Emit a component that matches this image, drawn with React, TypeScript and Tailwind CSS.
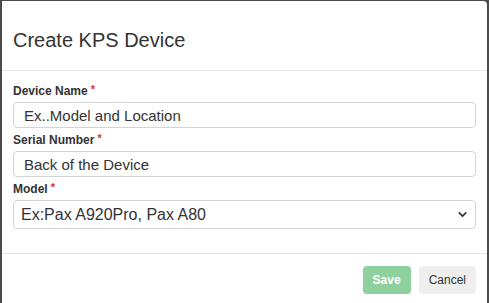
import { ChevronDown } from "lucide-react";

function FieldLabel({ children }: { children: string }) {
  return (
    <div className="flex items-start text-[12px] font-bold leading-[14px] text-[#333]">
      {children}
      <span className="ml-[3px] text-[11px] leading-[11px] text-[#e4312f]">*</span>
    </div>
  );
}

export default function App() {
  return (
    <div
      className="h-[303px] w-[489px] overflow-hidden bg-[#4b4b4b] pl-[2px] pt-[1px]"
      style={{ fontFamily: '"Liberation Sans", Arial, sans-serif' }}
    >
      <div className="flex h-[310px] w-[485px] flex-col rounded-tr-[4px] bg-white">
        <div className="flex h-[70px] items-center border-b border-[#e5e5e5] px-[11px] pt-[8px]">
          <h1 className="text-[20px] font-normal text-[#333]">Create KPS Device</h1>
        </div>
        <div className="flex flex-col px-[11px] pt-[13px]">
          <FieldLabel>Device Name</FieldLabel>
          <input
            defaultValue="Ex..Model and Location"
            className="mt-[4px] h-[26px] w-[463px] rounded-[4px] border border-[#d4d4d4] px-[10px] text-[15px] text-[#333] outline-none"
          />
          <div className="mt-[5px]">
            <FieldLabel>Serial Number</FieldLabel>
          </div>
          <input
            defaultValue="Back of the Device"
            className="mt-[4px] h-[26px] w-[463px] rounded-[4px] border border-[#d4d4d4] px-[10px] text-[15px] text-[#333] outline-none"
          />
          <div className="mt-[5px]">
            <FieldLabel>Model</FieldLabel>
          </div>
          <div className="mt-[4px] flex h-[29px] w-[463px] items-center justify-between rounded-[4px] border border-[#d4d4d4] pl-[7px] pr-[6px] text-[16px] text-[#333]">
            <span>Ex:Pax A920Pro, Pax A80</span>
            <ChevronDown className="h-[13px] w-[13px] text-[#333]" strokeWidth={3} />
          </div>
        </div>
        <div className="mt-[24px] flex justify-end gap-[8px] border-t border-[#e5e5e5] px-[11px] pt-[12px]">
          <button
            type="button"
            disabled
            className="h-[28px] rounded-[4px] bg-[#8fd19e] px-[10px] text-[12px] font-bold text-white"
          >
            Save
          </button>
          <button
            type="button"
            className="h-[28px] rounded-[4px] bg-[#efefef] px-[10px] text-[12px] text-[#333]"
          >
            Cancel
          </button>
        </div>
      </div>
    </div>
  );
}
